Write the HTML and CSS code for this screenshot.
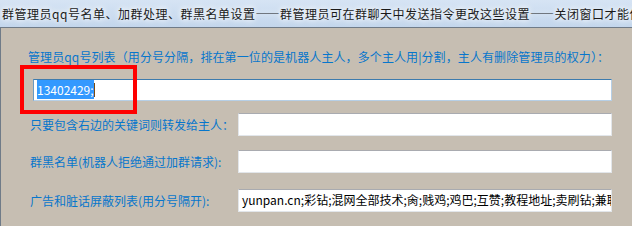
FILE: index.html
```html
<!DOCTYPE html>
<html lang="zh-CN">
<head>
    <meta charset="UTF-8">
    <title>群管理员设置</title>
    <link rel="stylesheet" href="styles.css">
</head>
<body>
    <div class="titlebar">群管理员qq号名单、加群处理、群黑名单设置——群管理员可在群聊天中发送指令更改这些设置——关闭窗口才能使用</div>
    <div class="panel">
        <div class="top-label">管理员qq号列表（用分号分隔，排在第一位的是机器人主人，多个主人用|分割，主人有删除管理员的权力）：</div>
        <div class="field field-wide focused"><span class="selected">13402429;</span><span class="caret"></span></div>
        <div class="mark"></div>

        <div class="rows">
            <div class="row">
                <div class="label">只要包含右边的关键词则转发给主人：</div>
                <div class="field"></div>
            </div>
            <div class="row">
                <div class="label">群黑名单(机器人拒绝通过加群请求):</div>
                <div class="field"></div>
            </div>
            <div class="row last">
                <div class="label">广告和脏话屏蔽列表(用分号隔开):</div>
                <div class="field">yunpan.cn;彩钻;混网全部技术;肏;贱鸡;鸡巴;互赞;教程地址;卖刷钻;兼职</div>
            </div>
        </div>
    </div>
</body>
</html>
```
FILE: styles.css
```css
html, body { margin: 0; height: 100%; overflow: hidden; }

body {
    font-family: "Noto Sans CJK SC", "Liberation Sans", sans-serif;
    font-size: 12px;
    background: #c6beb2;
}

.titlebar {
    height: 27px;
    line-height: 27px;
    padding-left: 2px;
    white-space: nowrap;
    overflow: hidden;
    color: #1a1a1a;
    letter-spacing: 0.5px;
    background: linear-gradient(#d6e4f4, #cadcf0 60%, #c3d6ec);
    border-bottom: 1px solid #6f7b88;
    text-shadow: 0 0 5px #fff, 0 0 8px #fff;
}

.panel {
    position: relative;
    height: 198px;
    border-left: 1px solid #6f7b88;
    padding: 21px 20px 0 0;
    box-sizing: border-box;
    background: #c6beb2;
}

.top-label {
    margin-left: 27px;
    line-height: 16px;
    color: #0676cc;
    letter-spacing: 0.1px;
    white-space: nowrap;
}

.field {
    height: 22px;
    line-height: 20px;
    box-sizing: border-box;
    background: #fff;
    border: 1px solid #e2e6ea;
    border-top-color: #a9abb0;
    padding-left: 3px;
    color: #000;
    white-space: nowrap;
    overflow: hidden;
    font-family: "Noto Sans CJK SC", "DejaVu Sans", sans-serif;
}

.field-wide {
    margin: 14px 0 0 32px;
}

.focused {
    border-color: #b6cfe6;
    border-top-color: #3d7bad;
    border-left-color: #6a9ac2;
}

.selected {
    background: #3399ff;
    color: #fff;
    padding: 1px 0;
}

.caret {
    display: inline-block;
    width: 1px;
    height: 14px;
    vertical-align: -2px;
    background: #7a4a10;
}

.mark {
    position: absolute;
    left: 19px;
    top: 37px;
    width: 109px;
    height: 41px;
    border: 4px solid #ff0000;
}

.rows {
    display: flex;
    flex-direction: column;
    gap: 14px;
    margin-top: 12px;
}

.row {
    display: flex;
    align-items: center;
}

.row.last {
    margin-top: 2px;
}

.row .label {
    flex: 0 0 237px;
    padding-left: 29px;
    box-sizing: border-box;
    color: #0676cc;
    white-space: nowrap;
}

.row .field {
    flex: 1;
    height: 23px;
}
```
